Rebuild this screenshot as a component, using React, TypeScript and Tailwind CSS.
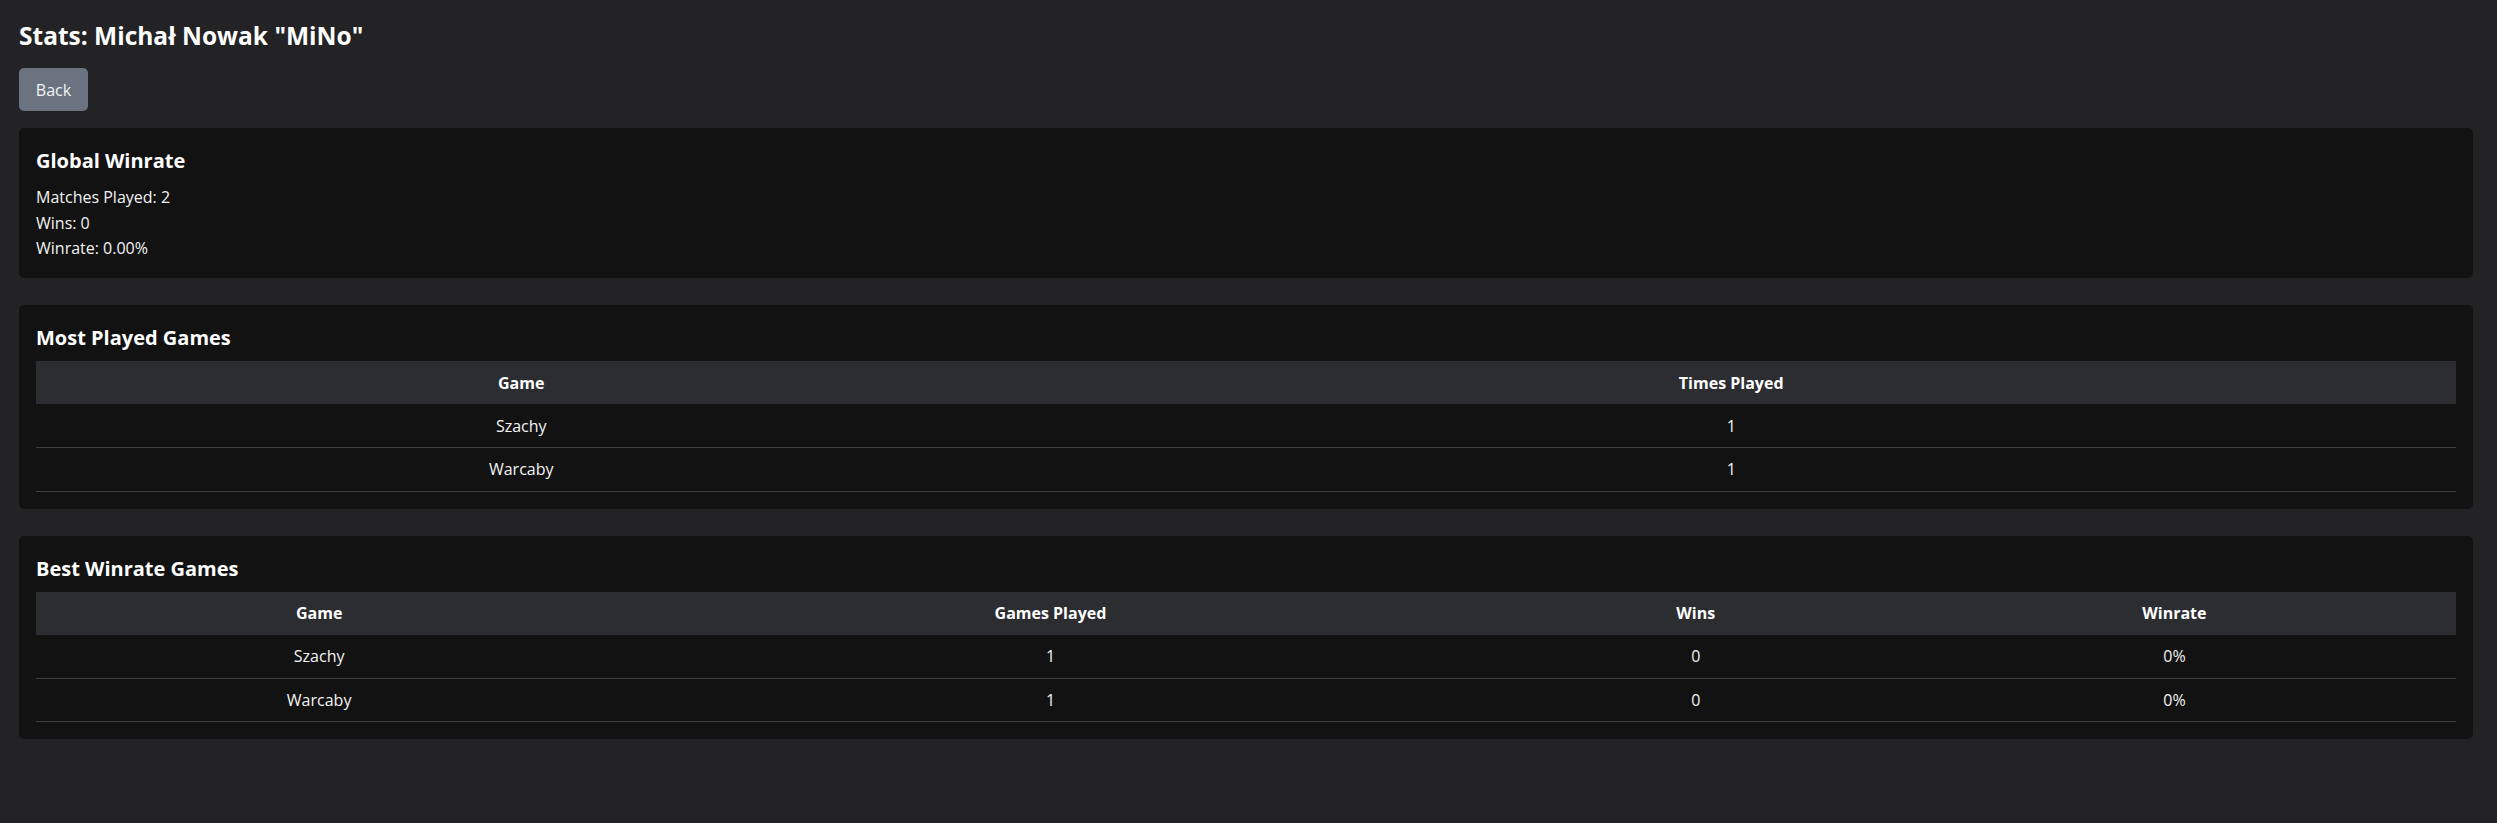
const mostPlayed = [
  { game: "Szachy", times: 1 },
  { game: "Warcaby", times: 1 },
]

const bestWinrate = [
  { game: "Szachy", played: 1, wins: 0, winrate: "0%" },
  { game: "Warcaby", played: 1, wins: 0, winrate: "0%" },
]

function Card({ title, children }: { title: string; children: React.ReactNode }) {
  return (
    <section className="rounded-[5px] bg-[#121212] px-[17px] pt-[19px] pb-[17px]">
      <h3 className="text-[20px] font-bold leading-[28px] text-white">{title}</h3>
      {children}
    </section>
  )
}

export default function App() {
  return (
    <div className="min-h-screen bg-[#232326] pl-[19px] pr-[24px] pb-10 pt-[21px] font-['Open_Sans',sans-serif] text-[#f2f2f2]">
      <h1 className="text-[24.5px] font-bold leading-[29px] text-white">Stats: Michał Nowak "MiNo"</h1>

      <button className="mt-[18px] flex h-[43px] w-[69px] items-center justify-center rounded-[5px] bg-[#6b7280] text-[16px] text-[#f3f4f6]">
        Back
      </button>

      <div className="mt-[17px] flex flex-col gap-[27px]">
        <section className="rounded-[5px] bg-[#121212] px-[17px] pt-[19px] pb-[16.5px]">
          <h3 className="text-[20px] font-bold leading-[28px] text-white">Global Winrate</h3>
          <div className="mt-[10px] text-[16px] leading-[25.5px]">
            <p>Matches Played: 2</p>
            <p>Wins: 0</p>
            <p>Winrate: 0.00%</p>
          </div>
        </section>

        <Card title="Most Played Games">
          <table className="mt-[9px] w-full table-fixed text-center text-[16px]">
            <colgroup>
              <col className="w-[40.1%]" />
              <col className="w-[59.9%]" />
            </colgroup>
            <thead>
              <tr className="h-[43px] bg-[#2c2d31]">
                <th className="p-0 font-bold text-white">Game</th>
                <th className="p-0 font-bold text-white">Times Played</th>
              </tr>
            </thead>
            <tbody>
              {mostPlayed.map((row) => (
                <tr key={row.game} className="h-[43.5px] border-b border-[#3f3f3f]">
                  <td className="p-0">{row.game}</td>
                  <td className="p-0">{row.times}</td>
                </tr>
              ))}
            </tbody>
          </table>
        </Card>

        <Card title="Best Winrate Games">
          <table className="mt-[9px] w-full table-fixed text-center text-[16px]">
            <colgroup>
              <col className="w-[23.4%]" />
              <col className="w-[37.04%]" />
              <col className="w-[16.29%]" />
              <col className="w-[23.27%]" />
            </colgroup>
            <thead>
              <tr className="h-[43px] bg-[#2c2d31]">
                <th className="p-0 font-bold text-white">Game</th>
                <th className="p-0 font-bold text-white">Games Played</th>
                <th className="p-0 font-bold text-white">Wins</th>
                <th className="p-0 font-bold text-white">Winrate</th>
              </tr>
            </thead>
            <tbody>
              {bestWinrate.map((row) => (
                <tr key={row.game} className="h-[43.5px] border-b border-[#3f3f3f]">
                  <td className="p-0">{row.game}</td>
                  <td className="p-0">{row.played}</td>
                  <td className="p-0">{row.wins}</td>
                  <td className="p-0">{row.winrate}</td>
                </tr>
              ))}
            </tbody>
          </table>
        </Card>
      </div>
    </div>
  )
}
